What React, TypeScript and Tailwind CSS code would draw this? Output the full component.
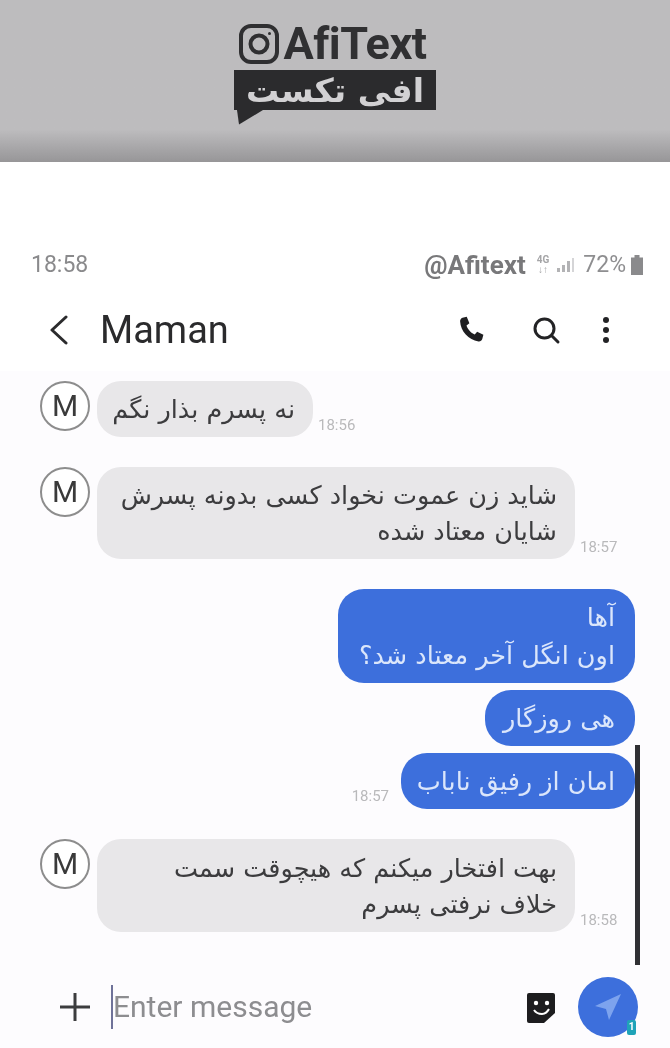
import React from "react";

const persian = "[font-family:'DejaVu_Sans','Noto_Sans',sans-serif]";

type Msg = {
  lines: string[];
  time: string;
  width: number;
  height: number;
  gap: string;
};

const received: Msg[] = [
  { lines: ["نه پسرم بذار نگم"], time: "18:56", width: 216, height: 56, gap: "mt-0" },
  { lines: ["شاید زن عموت نخواد کسی بدونه پسرش", "شایان معتاد شده"], time: "18:57", width: 478, height: 92, gap: "mt-[30px]" },
];

const Avatar = () => (
  <div className="flex h-[50px] w-[50px] shrink-0 items-center justify-center rounded-full border-2 border-[#8d8d8d] bg-white text-[30px] leading-none text-[#3a3a3a]">
    M
  </div>
);

const Received = ({ msg }: { msg: Msg }) => (
  <div className={`flex items-start ${msg.gap}`}>
    <Avatar />
    <div
      dir="rtl"
      className={`ml-[7px] flex shrink-0 flex-col justify-center rounded-[24px] bg-[#e8e7e9] px-[18px] text-[25.5px] leading-[36px] text-[#3c3c3e] ${persian}`}
      style={{ width: msg.width, height: msg.height }}
    >
      {msg.lines.map((l) => (
        <div key={l} className="whitespace-nowrap">{l}</div>
      ))}
    </div>
    <span className="ml-[5px] self-end pb-[4px] text-[15px] leading-[16px] text-[#b9b9bb]">{msg.time}</span>
  </div>
);

const Sent = ({ lines, width, height, className }: { lines: string[]; width: number; height: number; className: string }) => (
  <div
    dir="rtl"
    className={`flex flex-col justify-center rounded-[26px] bg-[#3d6fdc] px-[20px] text-[25.5px] leading-[38px] text-[#dbe6fb] ${persian} ${className}`}
    style={{ width, height }}
  >
    {lines.map((l) => (
      <div key={l} className="whitespace-nowrap">{l}</div>
    ))}
  </div>
);

export default function App() {
  return (
    <div className="relative h-[1048px] w-[670px] overflow-hidden bg-white font-['Roboto',sans-serif] blur-[0.6px]">
      {/* watermark banner */}
      <div className="flex h-[162px] flex-col items-center bg-gradient-to-b from-[#bdbcbe] from-80% to-[#979698] pt-[23px]">
        <div className="mr-[5px] flex items-center gap-[3px]">
          <svg width="42" height="42" viewBox="0 0 42 42" fill="none" stroke="#2f2f31" strokeWidth="4">
            <rect x="3" y="3" width="36" height="36" rx="10" />
            <circle cx="21" cy="21" r="8.5" />
            <circle cx="31.5" cy="10.5" r="1.5" fill="#2f2f31" stroke="none" />
          </svg>
          <span className="text-[45px] font-bold leading-[42px] tracking-[-0.5px] text-[#303032]">AfiText</span>
        </div>
        <div className="relative mt-[5px] flex h-[40px] w-[202px] items-center justify-center bg-[#2b2b2d]">
          <span dir="rtl" className={`text-[33px] font-bold leading-none text-[#d2d1d3] ${persian}`}>
            افی تکست
          </span>
          <svg className="absolute left-[2px] top-[40px]" width="28" height="15" viewBox="0 0 28 15">
            <path d="M1 0h26L3 14.5z" fill="#2b2b2d" />
          </svg>
        </div>
      </div>

      {/* status bar */}
      <div className="mt-[87px] flex h-[32px] items-center justify-between pl-[31px] pr-[26px]">
        <span className="text-[23px] text-[#8a8a8c]">18:58</span>
        <div className="flex items-center">
          <span className="text-[26px] font-bold text-[#78787a]">@Afitext</span>
          <div className="ml-[11px] flex flex-col items-center text-[10px] font-bold leading-[10px] text-[#a5a5a7]">
            <span>4G</span>
            <span>↓↑</span>
          </div>
          <svg className="ml-[8px]" width="18" height="16" viewBox="0 0 18 16" fill="#b3b3b5">
            <rect x="0" y="11" width="3" height="4" />
            <rect x="5" y="8" width="3" height="7" />
            <rect x="10" y="4" width="3" height="11" />
            <rect x="15" y="1" width="2" height="14" fill="#d5d5d7" />
          </svg>
          <span className="ml-[8px] text-[23px] text-[#8e8e90]">72%</span>
          <svg className="ml-[4px]" width="14" height="22" viewBox="0 0 14 22" fill="#8a8a8c">
            <path d="M4.5 1h5v2.5H13V21H1V3.5h3.5z" />
          </svg>
        </div>
      </div>

      {/* header */}
      <div className="mt-[24px] flex h-[50px] items-center pl-[50px] pr-[61px]">
        <svg width="18" height="30" viewBox="0 0 18 30" fill="none" stroke="#2b2b2d" strokeWidth="3" strokeLinecap="round" strokeLinejoin="round">
          <path d="M16 2 2 15l14 13" />
        </svg>
        <span className="ml-[32px] text-[38px] leading-none text-[#2a2a2c]">Maman</span>
        <div className="ml-auto flex items-center">
          <svg width="30" height="30" viewBox="0 0 24 24" fill="#1f1f21">
            <path d="M5.2 2.2 8.6 1.4l2.1 5.2-2.3 1.8c.9 3 3.5 6 6.6 7.2l1.9-2.2 5 2.4-.9 3.4c-.4 1.3-1.6 2.2-3 2C10 20 3.7 13 3.3 5.2c-.1-1.4.7-2.6 1.9-3z" />
          </svg>
          <svg className="ml-[45px]" width="30" height="30" viewBox="0 0 30 30" fill="none" stroke="#232325" strokeWidth="3" strokeLinecap="round">
            <circle cx="13.5" cy="13.5" r="9.5" />
            <path d="m21 21 6 6" />
          </svg>
          <div className="ml-[42px] flex flex-col gap-[4px]">
            <span className="h-[6px] w-[6px] rounded-full bg-[#232325]" />
            <span className="h-[6px] w-[6px] rounded-full bg-[#232325]" />
            <span className="h-[6px] w-[6px] rounded-full bg-[#232325]" />
          </div>
        </div>
      </div>

      {/* messages */}
      <div className="mt-[16px] h-[600px] bg-[#fdfcfe] pl-[40px] pt-[10px]">
        {received.map((m) => (
          <Received key={m.time} msg={m} />
        ))}

        <div className="mt-[30px] flex flex-col items-end pr-[35px]">
          <Sent lines={["آها", "اون انگل آخر معتاد شد؟"]} width={297} height={94} className="" />
          <Sent lines={["هی روزگار"]} width={150} height={56} className="mt-[7px]" />
          <div className="mt-[7px] flex items-end">
            <span className="mb-[5px] mr-[12px] text-[15px] leading-[16px] text-[#b9b9bb]">18:57</span>
            <Sent lines={["امان از رفیق ناباب"]} width={234} height={56} className="" />
          </div>
        </div>

        <div className="mt-[30px]">
          <Received msg={{ lines: ["بهت افتخار میکنم که هیچوقت سمت", "خلاف نرفتی پسرم"], time: "18:58", width: 478, height: 93, gap: "mt-0" }} />
        </div>
      </div>

      {/* dark line over the thread */}
      <div className="absolute left-[635px] top-[745px] h-[220px] w-[5px] bg-[#303034]" />

      {/* composer */}
      <div className="absolute bottom-0 left-0 flex h-[83px] w-full items-center bg-[#fdfcfe] pl-[59px] pr-[32px]">
        <svg width="32" height="32" viewBox="0 0 32 32" stroke="#3c3c3e" strokeWidth="3">
          <path d="M16 2v28M1 16h30" />
        </svg>
        <div className="ml-[20px] h-[44px] w-[2px] bg-[#6f7299]" />
        <span className="text-[30px] leading-none text-[#8d8d90]">Enter message</span>
        <svg className="ml-auto" width="30" height="34" viewBox="0 0 30 34">
          <path d="M3 3h24a2 2 0 0 1 2 2v18L18 33H3a2 2 0 0 1-2-2V5a2 2 0 0 1 2-2z" fill="#1d1d1f" />
          <circle cx="10" cy="13" r="2.2" fill="#fff" />
          <circle cx="21" cy="13" r="2.2" fill="#fff" />
          <path d="M8 20c2 3 4 4 8 4s5-2 7-5" fill="none" stroke="#fff" strokeWidth="2" />
        </svg>
        <div className="relative ml-[22px] flex h-[60px] w-[60px] items-center justify-center rounded-full bg-[#3d6fdc]">
          <svg width="32" height="32" viewBox="0 0 32 32">
            <path d="M29 3 3 15l11 3 3 11z" fill="#7da3ee" />
          </svg>
          <span className="absolute bottom-[2px] right-[2px] flex h-[15px] w-[9px] items-center justify-center rounded-[2px] bg-[#1fa3b8] text-[10px] font-bold leading-none text-white">
            1
          </span>
        </div>
      </div>
    </div>
  );
}
